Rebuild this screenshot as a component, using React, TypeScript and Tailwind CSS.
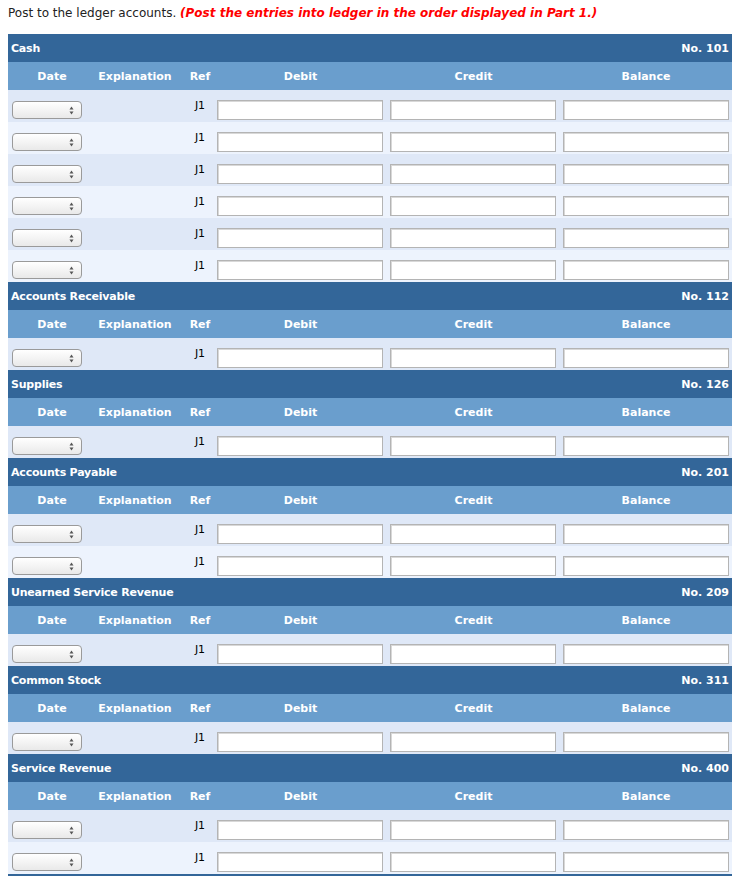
import React from 'react';

type Account = { name: string; no: string; rows: number };

const accounts: Account[] = [
  { name: 'Cash', no: '101', rows: 6 },
  { name: 'Accounts Receivable', no: '112', rows: 1 },
  { name: 'Supplies', no: '126', rows: 1 },
  { name: 'Accounts Payable', no: '201', rows: 2 },
  { name: 'Unearned Service Revenue', no: '209', rows: 1 },
  { name: 'Common Stock', no: '311', rows: 1 },
  { name: 'Service Revenue', no: '400', rows: 2 },
];

const SelectBox = () => (
  <div className="mt-[11px] ml-[4px] flex h-[18px] w-[70px] items-center justify-end rounded-[4px] border border-[#9a9a9a] bg-gradient-to-b from-white to-[#e9e9e9] pr-[7px]">
    <svg width="5" height="9" viewBox="0 0 5 9">
      <path d="M2.5 0.5 L4.5 3.5 L0.5 3.5 Z" fill="#555" />
      <path d="M2.5 8.5 L4.5 5.5 L0.5 5.5 Z" fill="#555" />
    </svg>
  </div>
);

const Field = () => (
  <div className="mt-[10px] h-[20px] w-[166px] border border-[#b4b4b4] bg-white shadow-[inset_1px_1px_0_#d8d8d8]" />
);

const Ledger = ({ acc }: { acc: Account }) => (
  <div>
    <div className="flex h-[28px] items-center justify-between bg-[#336699] px-[3px] pt-[2px] text-[11px] font-bold text-white">
      <span className="tracking-[-0.2px]">{acc.name}</span>
      <span>No. {acc.no}</span>
    </div>
    <div className="flex h-[28px] items-center bg-[#6a9ecd] pt-[2px] text-[11px] font-bold text-white">
      <div className="w-[88px] text-center">Date</div>
      <div className="w-[76px] pl-[2px] text-center">Explanation</div>
      <div className="w-[42px] pl-[14px] text-center">Ref</div>
      <div className="w-[173px] text-center">Debit</div>
      <div className="w-[173px] text-center">Credit</div>
      <div className="w-[172px] text-center">Balance</div>
    </div>
    {Array.from({ length: acc.rows }).map((_, i) => (
      <div
        key={i}
        className={`flex h-[32px] items-start ${i % 2 === 0 ? 'bg-[#dfe8f7]' : 'bg-[#edf3fd]'}`}
      >
        <div className="w-[88px]">
          <SelectBox />
        </div>
        <div className="w-[76px]" />
        <div className="w-[42px] pt-[9px] pl-[14px] text-center text-[11px] leading-[14px] text-black">J1</div>
        <div className="w-[173px] pl-[3px]">
          <Field />
        </div>
        <div className="w-[173px] pl-[3px]">
          <Field />
        </div>
        <div className="w-[172px] pl-[3px]">
          <Field />
        </div>
      </div>
    ))}
  </div>
);

export default function App() {
  return (
    <div className="min-h-screen bg-white px-[8px] pt-[4px] font-['DejaVu_Sans',sans-serif]">
      <p className="h-[30px] text-[12px] leading-[18px] text-[#222]">
        Post to the ledger accounts.{' '}
        <span className="font-bold italic text-[#ff0000]">
          (Post the entries into ledger in the order displayed in Part 1.)
        </span>
      </p>
      <div className="w-[724px] border-b-2 border-[#336699]">
        {accounts.map((a) => (
          <Ledger key={a.no} acc={a} />
        ))}
      </div>
    </div>
  );
}
